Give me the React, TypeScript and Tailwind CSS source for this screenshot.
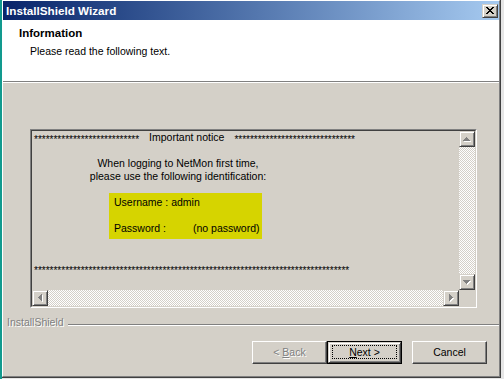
import React from 'react'

const font = "font-['Liberation_Sans',Arial,sans-serif]"

const raised =
  'border border-t-[#d4d0c8] border-l-[#d4d0c8] border-r-[#404040] border-b-[#404040] bg-[#d4d0c8] shadow-[inset_1px_1px_#ffffff,inset_-1px_-1px_#808080]'

const hatch =
  '[background-image:conic-gradient(#ffffff_25%,#d4d0c8_0_50%,#ffffff_0_75%,#d4d0c8_0)] [background-size:2px_2px]'

const arrows: Record<string, string> = {
  up: 'M3 0h1v1h-1z M2 1h3v1h-3z M1 2h5v1h-5z M0 3h7v1h-7z',
  down: 'M0 0h7v1h-7z M1 1h5v1h-5z M2 2h3v1h-3z M3 3h1v1h-1z',
  left: 'M3 0h1v7h-1z M2 1h1v5h-1z M1 2h1v3h-1z M0 3h1v1h-1z',
  right: 'M0 0h1v7h-1z M1 1h1v5h-1z M2 2h1v3h-1z M3 3h1v1h-1z',
}

const ScrollButton = ({ dir }: { dir: 'up' | 'down' | 'left' | 'right' }) => {
  const vertical = dir === 'up' || dir === 'down'
  const w = vertical ? 8 : 5
  const h = vertical ? 5 : 8
  return (
    <div className={`flex h-4 w-4 shrink-0 items-center justify-center ${raised}`}>
      <svg width={w} height={h} viewBox={`0 0 ${w} ${h}`} shapeRendering="crispEdges">
        <path d={arrows[dir]} fill="#ffffff" transform="translate(1 1)" />
        <path d={arrows[dir]} fill="#808080" />
      </svg>
    </div>
  )
}

const Button = ({
  children,
  isDefault,
  disabled,
}: {
  children: React.ReactNode
  isDefault?: boolean
  disabled?: boolean
}) => {
  const label = (
    <span
      className={`text-[10.5px] leading-[13px] ${
        disabled ? 'text-[#808080] [text-shadow:1px_1px_0_#ffffff]' : 'text-black'
      }`}
    >
      {children}
    </span>
  )
  if (isDefault) {
    return (
      <div className="h-[23px] w-[75px] border border-black">
        <div className={`relative flex h-full w-full items-center justify-center ${raised}`}>
          <div className="absolute inset-x-[3px] top-[2px] bottom-[3px] border border-dotted border-black" />
          {label}
        </div>
      </div>
    )
  }
  return (
    <div
      className={`flex h-[23px] w-[75px] items-center justify-center border border-t-white border-l-white border-r-[#404040] border-b-[#404040] bg-[#d4d0c8] shadow-[inset_-1px_-1px_#808080]`}
    >
      {label}
    </div>
  )
}

export default function App() {
  return (
    <div className={`flex h-[379px] w-[504px] bg-[#e6e6e6] ${font}`}>
      <div className="w-[2px] shrink-0 bg-[#129a8e]" />
      <div className="h-[378px] w-[499px] border-r border-b border-[#404040]">
        <div className="flex h-full w-full flex-col border-t border-l border-white border-r border-r-[#808080] border-b border-b-[#808080] bg-[#d4d0c8]">
          {/* title bar */}
          <div className="flex h-[19px] shrink-0 items-center justify-between bg-linear-to-r from-[#0a246a] to-[#a6caf0] pl-[3px] pr-[1px]">
            <span className="text-[11.7px] leading-[13px] font-bold text-white">InstallShield Wizard</span>
            <div className={`flex h-[14px] w-4 items-center justify-center ${raised}`}>
              <svg width="8" height="7" viewBox="0 0 8 7" shapeRendering="crispEdges">
                <path
                  d="M0 0h2v1h-2z M6 0h2v1h-2z M1 1h2v1h-2z M5 1h2v1h-2z M2 2h4v1h-4z M3 3h2v1h-2z M2 4h4v1h-4z M1 5h2v1h-2z M5 5h2v1h-2z M0 6h2v1h-2z M6 6h2v1h-2z"
                  fill="#000000"
                />
              </svg>
            </div>
          </div>

          {/* header */}
          <div className="h-[61px] shrink-0 bg-white pl-4 pt-[7px]">
            <div className="text-[11.5px] leading-[13px] font-bold text-black">Information</div>
            <div className="mt-[5px] pl-[11px] text-[10.5px] leading-[13px] text-black">
              Please read the following text.
            </div>
          </div>
          <div className="h-0 shrink-0 border-t border-t-[#808080] border-b border-b-white" />

          {/* body */}
          <div className="flex flex-1 flex-col">
            <div className="ml-[27px] mt-[46px] h-[179px] w-[447px] border border-t-[#808080] border-l-[#808080] border-r-white border-b-white">
              <div className="flex h-full w-full flex-col border border-t-[#404040] border-l-[#404040] border-r-[#d4d0c8] border-b-[#d4d0c8]">
                <div className="flex min-h-0 flex-1">
                  <div className="flex-1 overflow-hidden pl-[2px] text-[10.5px] leading-[13px] text-black">
                    <div className="whitespace-nowrap">
                      <span className="relative top-[2px] text-[10px]">{'*'.repeat(27)}</span>
                      <span className="mx-[10px]">Important notice</span>
                      <span className="relative top-[2px] text-[10px]">{'*'.repeat(31)}</span>
                    </div>
                    <div className="ml-[44px] mt-[13px] w-[200px] text-center whitespace-nowrap">
                      When logging to NetMon first time,
                      <br />
                      please use the following identification:
                    </div>
                    <div className="ml-[75px] mt-[10px] w-[153px] bg-[#d6d400] pt-[3px] pb-[4px] pl-[5px]">
                      <div>Username : admin</div>
                      <div className="mt-[13px] flex">
                        <span className="w-[79px]">Password :</span>
                        <span>(no password)</span>
                      </div>
                    </div>
                    <div className="mt-[25px] whitespace-nowrap text-[10px]">{'*'.repeat(81)}</div>
                  </div>
                  <div className="flex w-4 shrink-0 flex-col">
                    <ScrollButton dir="up" />
                    <div className={`flex-1 ${hatch}`} />
                    <ScrollButton dir="down" />
                  </div>
                </div>
                <div className="flex h-4 shrink-0">
                  <ScrollButton dir="left" />
                  <div className={`flex-1 ${hatch}`} />
                  <ScrollButton dir="right" />
                  <div className="h-4 w-4 shrink-0 bg-[#d4d0c8]" />
                </div>
              </div>
            </div>

            {/* footer */}
            <div className="mt-2 flex h-[13px] items-start pl-[4px]">
              <span className="text-[10.5px] leading-[13px] text-[#808080] [text-shadow:1px_1px_0_#ffffff]">
                InstallShield
              </span>
              <div className="ml-[4px] mt-[8px] flex-1 border-t border-t-[#808080] border-b border-b-white" />
            </div>

            <div className="mt-3 flex justify-end pr-3">
              <Button disabled>
                &lt; <span className="underline underline-offset-[1px]">B</span>ack
              </Button>
              <Button isDefault>
                <span className="underline underline-offset-[1px]">N</span>ext &gt;
              </Button>
              <div className="ml-[10px]">
                <Button>Cancel</Button>
              </div>
            </div>
          </div>
        </div>
      </div>
    </div>
  )
}
